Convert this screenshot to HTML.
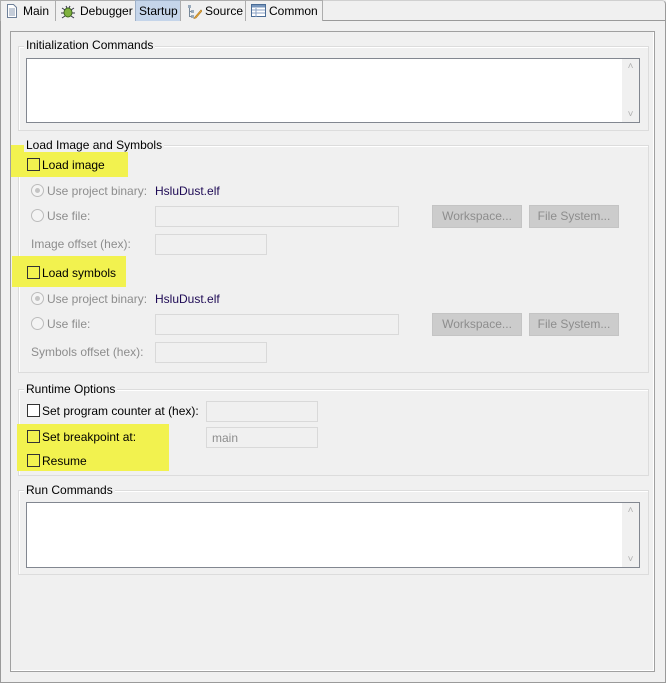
<!DOCTYPE html>
<html><head><meta charset="utf-8"><style>
*{box-sizing:border-box}
body{margin:0;width:666px;height:683px;background:#f0f0f0;font-family:"Liberation Sans",sans-serif;font-size:12px;color:#000;position:relative;overflow:hidden}
.a{position:absolute}
.t{position:absolute;white-space:nowrap;line-height:14px}
.g{color:#8d8d8d}
.grp{position:absolute;border:1px solid #dcdcdc;box-shadow:inset 1px 1px 0 #fff}
.lbl{position:absolute;background:#f0f0f0;padding:0 2px;line-height:14px;white-space:nowrap;z-index:2}
.ta{position:absolute;background:#fff;border:1px solid #828790}
.sb{position:absolute;right:0;top:0;bottom:0;width:17px;background:#f0f0f0;color:#b0b0b0;font-size:10px;text-align:center}
.cb{position:absolute;width:13px;height:13px;border:1px solid #333;background:#fff}
.y{background:#f2f24f}
.hl{position:absolute;background:#f2f24f}
.rd{position:absolute;width:13px;height:13px;border:1px solid #bcbcbc;border-radius:50%;background:#f4f4f4}
.rd.on::after{content:"";position:absolute;left:3px;top:3px;width:5px;height:5px;border-radius:50%;background:#c4c4c4}
.box{position:absolute;border:1px solid #d9d9d9;background:#f0f0f0}
.btn{position:absolute;background:#cccccc;border:1px solid #c4c4c4;color:#8d8d8d;text-align:center;line-height:20px}
.tab{position:absolute;top:0;height:21px;border:1px solid #adadad;border-bottom:none;background:#f0f0f0;line-height:20px}
</style></head><body>
<div class="a" style="left:0;top:20px;width:666px;height:663px;border:1px solid #9a9a9a"></div>
<div class="a" style="left:0;top:0;width:666px;height:21px;border-right:1px solid #9a9a9a;border-top-right-radius:4px;border-top:1px solid #d0d0d0"></div>
<div class="tab" style="left:0;width:56px"><svg class="a" style="left:5px;top:3px" width="12" height="14"><path d="M1.5 .5h6l3 3v10h-9z" fill="#fff" stroke="#6d7f98"/><path d="M3 5h6M3 7h6M3 9h6M3 11h6" stroke="#8a9ab0"/></svg><span class="a" style="left:22px">Main</span></div>
<div class="tab" style="left:55px;width:81px"><svg class="a" style="left:4px;top:3px" width="15" height="15"><ellipse cx="8" cy="8.5" rx="4" ry="4.5" fill="#7fb13f" stroke="#3f6a1d"/><path d="M2 4l3 2M14 4l-3 2M1 9h3M15 9h-3M2 14l3-2M14 14l-3-2M6 2l1 2M10 2l-1 2" stroke="#334" /></svg><span class="a" style="left:24px">Debugger</span></div>
<div class="tab" style="left:135px;width:46px;background:#c5d5ea;border-color:#9fb1c8"><span class="a" style="left:3px">Startup</span></div>
<div class="tab" style="left:180px;width:66px"><svg class="a" style="left:5px;top:3px" width="16" height="15"><path d="M2 1h3v3H2zM5 6h3v3H5zM5 11h3v3H5z" fill="#9ab" /><path d="M3.5 4v8.5h2M3.5 7.5h2" stroke="#789" fill="none"/><path d="M9 13l6-7 1 1-6 7-2 .5z" fill="#f0b040" stroke="#b07a20" stroke-width=".7"/></svg><span class="a" style="left:24px">Source</span></div>
<div class="tab" style="left:245px;width:78px"><svg class="a" style="left:5px;top:3px" width="15" height="14"><rect x=".5" y=".5" width="14" height="12" fill="#fff" stroke="#4a6c96"/><rect x="1" y="1" width="13" height="2.5" fill="#7796bd"/><path d="M1 6h13M1 9h13M5 4v9" stroke="#8aa2c4"/></svg><span class="a" style="left:23px">Common</span></div>
<div class="a" style="left:10px;top:31px;width:645px;height:641px;border:1px solid #a0a0a0;box-shadow:inset -1px -1px 0 #fff"></div>

<div class="grp" style="left:18px;top:46px;width:631px;height:85px"></div>
<div class="lbl" style="left:24px;top:38px">Initialization Commands</div>
<div class="ta" style="left:26px;top:58px;width:614px;height:65px"><div class="sb"><div style="margin-top:2px">&#x2C4;</div><div style="position:absolute;bottom:2px;width:17px">&#x2C5;</div></div></div>

<div class="grp" style="left:18px;top:145px;width:631px;height:228px"></div>
<div class="hl" style="left:11px;top:145px;width:117px;height:32px"></div>
<div class="lbl" style="left:24px;top:138px">Load Image and Symbols</div>
<div class="cb y" style="left:27px;top:158px"></div><div class="t" style="left:42px;top:158px">Load image</div>
<div class="rd on" style="left:31px;top:184px"></div><div class="t g" style="left:47px;top:184px">Use project binary:</div>
<div class="t" style="left:155px;top:184px;color:#1e0a55">HsluDust.elf</div>
<div class="rd" style="left:31px;top:209px"></div><div class="t g" style="left:47px;top:209px">Use file:</div>
<div class="box" style="left:155px;top:206px;width:244px;height:21px"></div>
<div class="btn" style="left:432px;top:205px;width:90px;height:23px">Workspace...</div>
<div class="btn" style="left:529px;top:205px;width:90px;height:23px">File System...</div>
<div class="t g" style="left:31px;top:237px">Image offset (hex):</div>
<div class="box" style="left:155px;top:234px;width:112px;height:21px"></div>

<div class="hl" style="left:12px;top:256px;width:114px;height:31px"></div>
<div class="cb y" style="left:27px;top:266px"></div><div class="t" style="left:42px;top:266px">Load symbols</div>
<div class="rd on" style="left:31px;top:292px"></div><div class="t g" style="left:47px;top:292px">Use project binary:</div>
<div class="t" style="left:155px;top:292px;color:#1e0a55">HsluDust.elf</div>
<div class="rd" style="left:31px;top:317px"></div><div class="t g" style="left:47px;top:317px">Use file:</div>
<div class="box" style="left:155px;top:314px;width:244px;height:21px"></div>
<div class="btn" style="left:432px;top:313px;width:90px;height:23px">Workspace...</div>
<div class="btn" style="left:529px;top:313px;width:90px;height:23px">File System...</div>
<div class="t g" style="left:31px;top:345px">Symbols offset (hex):</div>
<div class="box" style="left:155px;top:342px;width:112px;height:21px"></div>

<div class="grp" style="left:18px;top:389px;width:631px;height:87px"></div>
<div class="lbl" style="left:24px;top:382px">Runtime Options</div>
<div class="cb" style="left:27px;top:404px"></div><div class="t" style="left:42px;top:404px">Set program counter at (hex):</div>
<div class="box" style="left:206px;top:401px;width:112px;height:21px"></div>
<div class="hl" style="left:17px;top:424px;width:152px;height:47px"></div>
<div class="cb y" style="left:27px;top:430px"></div><div class="t" style="left:42px;top:430px">Set breakpoint at:</div>
<div class="box" style="left:206px;top:427px;width:112px;height:21px"></div><div class="t g" style="left:212px;top:431px">main</div>
<div class="cb y" style="left:27px;top:454px"></div><div class="t" style="left:42px;top:454px">Resume</div>

<div class="grp" style="left:18px;top:490px;width:631px;height:85px"></div>
<div class="lbl" style="left:24px;top:483px">Run Commands</div>
<div class="ta" style="left:26px;top:502px;width:614px;height:66px"><div class="sb"><div style="margin-top:2px">&#x2C4;</div><div style="position:absolute;bottom:2px;width:17px">&#x2C5;</div></div></div>
</body></html>
